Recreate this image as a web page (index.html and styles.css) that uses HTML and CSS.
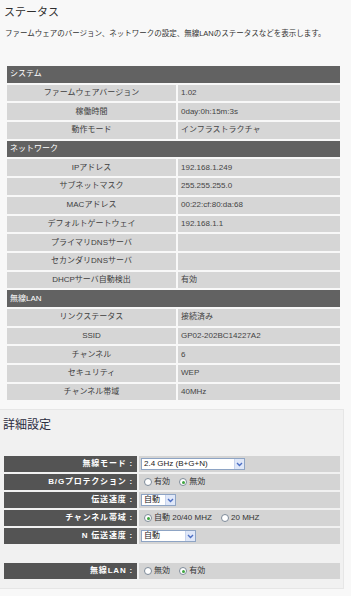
FILE: index.html
```html
<!DOCTYPE html>
<html lang="ja">
<head>
<meta charset="utf-8">
<title>ステータス</title>
<link rel="stylesheet" href="styles.css">
</head>
<body>
<div class="page">
  <section class="status">
    <h1 class="title">ステータス</h1>
    <p class="desc">ファームウェアのバージョン、ネットワークの設定、無線LANのステータスなどを表示します。</p>
    <table class="info">
      <colgroup><col class="c1"><col class="c2"></colgroup>
      <tr><th colspan="2" class="sec">システム</th></tr>
      <tr><td class="lbl">ファームウェアバージョン</td><td class="val">1.02</td></tr>
      <tr><td class="lbl">稼働時間</td><td class="val">0day:0h:15m:3s</td></tr>
      <tr><td class="lbl">動作モード</td><td class="val">インフラストラクチャ</td></tr>
      <tr><th colspan="2" class="sec">ネットワーク</th></tr>
      <tr><td class="lbl">IPアドレス</td><td class="val">192.168.1.249</td></tr>
      <tr><td class="lbl">サブネットマスク</td><td class="val">255.255.255.0</td></tr>
      <tr><td class="lbl">MACアドレス</td><td class="val">00:22:cf:80:da:68</td></tr>
      <tr><td class="lbl">デフォルトゲートウェイ</td><td class="val">192.168.1.1</td></tr>
      <tr><td class="lbl">プライマリDNSサーバ</td><td class="val"></td></tr>
      <tr><td class="lbl">セカンダリDNSサーバ</td><td class="val"></td></tr>
      <tr><td class="lbl">DHCPサーバ自動検出</td><td class="val">有効</td></tr>
      <tr><th colspan="2" class="sec">無線LAN</th></tr>
      <tr><td class="lbl">リンクステータス</td><td class="val">接続済み</td></tr>
      <tr><td class="lbl">SSID</td><td class="val">GP02-202BC14227A2</td></tr>
      <tr><td class="lbl">チャンネル</td><td class="val">6</td></tr>
      <tr><td class="lbl">セキュリティ</td><td class="val">WEP</td></tr>
      <tr><td class="lbl">チャンネル帯域</td><td class="val">40MHz</td></tr>
    </table>
  </section>

  <section class="adv">
    <h2 class="title2">詳細設定</h2>
    <table class="form">
      <colgroup><col class="f1"><col class="f2"></colgroup>
      <tr>
        <td class="flbl">無線モード :</td>
        <td class="fval">
          <span class="sel sel-mode"><span class="sel-text">2.4 GHz (B+G+N)</span><span class="sel-btn"><svg width="7" height="5" viewBox="0 0 7 5"><path d="M1 1 L3.5 3.5 L6 1" fill="none" stroke="#4d6fc4" stroke-width="1.4"/></svg></span></span>
        </td>
      </tr>
      <tr>
        <td class="flbl">B/Gプロテクション :</td>
        <td class="fval">
          <span class="radio"></span><span class="rlab">有効</span>
          <span class="radio on"></span><span class="rlab">無効</span>
        </td>
      </tr>
      <tr>
        <td class="flbl">伝送速度 :</td>
        <td class="fval">
          <span class="sel sel-rate"><span class="sel-text">自動</span><span class="sel-btn"><svg width="7" height="5" viewBox="0 0 7 5"><path d="M1 1 L3.5 3.5 L6 1" fill="none" stroke="#4d6fc4" stroke-width="1.4"/></svg></span></span>
        </td>
      </tr>
      <tr>
        <td class="flbl">チャンネル帯域 :</td>
        <td class="fval">
          <span class="radio on"></span><span class="rlab">自動 20/40 MHZ</span>
          <span class="radio"></span><span class="rlab">20 MHZ</span>
        </td>
      </tr>
      <tr>
        <td class="flbl">N 伝送速度 :</td>
        <td class="fval">
          <span class="sel sel-nrate"><span class="sel-text">自動</span><span class="sel-btn"><svg width="7" height="5" viewBox="0 0 7 5"><path d="M1 1 L3.5 3.5 L6 1" fill="none" stroke="#4d6fc4" stroke-width="1.4"/></svg></span></span>
        </td>
      </tr>
      <tr class="blank"><td></td><td></td></tr>
      <tr>
        <td class="flbl">無線LAN :</td>
        <td class="fval">
          <span class="radio"></span><span class="rlab">無効</span>
          <span class="radio on"></span><span class="rlab">有効</span>
        </td>
      </tr>
    </table>
  </section>
</div>
</body>
</html>
```

FILE: styles.css
```css
html, body {
  margin: 0;
  padding: 0;
}
body {
  background: #f8f8f8;
  font-family: "Liberation Sans", "Noto Sans CJK JP", sans-serif;
  color: #3a3a3a;
}
.page {
  width: 351px;
}
.status {
  padding: 0;
}
.title {
  margin: 0;
  padding: 4px 0 0 4px;
  font-family: "Noto Sans CJK JP", sans-serif;
  font-weight: normal;
  font-size: 11px;
  line-height: 14px;
  color: #2e2e2e;
}
.desc {
  margin: 11px 0 0 0;
  padding-left: 5px;
  font-size: 7.5px;
  line-height: 10px;
  color: #333;
  white-space: nowrap;
}
.info {
  margin: 25px 0 0 5px;
  width: 337px;
  border-collapse: separate;
  border-spacing: 2px;
  table-layout: fixed;
  font-size: 8px;
}
.info .c1 { width: 169px; }
.info .c2 { width: 162px; }
.info th,
.info td {
  height: 16.7px;
  padding: 0;
  line-height: 10px;
  box-sizing: border-box;
}
.info .sec {
  background: #626262;
  color: #fff;
  text-align: left;
  font-weight: normal;
  padding-left: 3px;
}
.info .lbl {
  background: #d6d6d6;
  text-align: center;
  color: #3e3e3e;
}
.info .val {
  background: #d6d6d6;
  text-align: left;
  padding-left: 3px;
  color: #444;
}

.adv {
  margin-top: 7px;
  width: 343px;
  background: #f1f1f1;
  border-top: 1px solid #e6e6e6;
  border-right: 1px solid #e6e6e6;
  border-bottom: 1px solid #e6e6e6;
  padding: 6px 0 7px 0;
}
.title2 {
  margin: 0;
  padding-left: 3px;
  font-family: "Noto Sans CJK JP", sans-serif;
  font-weight: normal;
  font-size: 12px;
  line-height: 16px;
  color: #2c2c3e;
}
.form {
  margin: 22px 0 0 2px;
  width: 340px;
  border-collapse: separate;
  border-spacing: 2px;
  table-layout: fixed;
  font-size: 8px;
}
.form .f1 { width: 133px; }
.form .f2 { width: 201px; }
.form td {
  height: 16px;
  padding: 0;
  box-sizing: border-box;
  line-height: 10px;
}
.form .flbl {
  background: #545454;
  color: #fff;
  font-weight: bold;
  text-align: right;
  padding-right: 4px;
  letter-spacing: 0.8px;
  white-space: nowrap;
}
.form .fval {
  background: #d4d4d4;
  padding-left: 2px;
  color: #333;
  white-space: nowrap;
}
.form .blank td {
  height: 15px;
  background: transparent;
}
.sel {
  display: inline-flex;
  align-items: stretch;
  vertical-align: middle;
  height: 12px;
  box-sizing: border-box;
  background: #fff;
  border: 1px solid #8ea4c4;
  font-size: 8px;
  line-height: 10px;
  color: #222;
}
.sel-text {
  flex: 1;
  padding-left: 2px;
}
.sel-btn {
  width: 9px;
  display: flex;
  align-items: center;
  justify-content: center;
  background: #dfe7f8;
  border-left: 1px solid #c8d4ee;
}
.sel-mode { width: 104px; }
.sel-rate { width: 35px; }
.sel-nrate { width: 55px; }
.radio {
  display: inline-block;
  vertical-align: middle;
  width: 8px;
  height: 8px;
  box-sizing: border-box;
  border-radius: 50%;
  border: 1px solid #7d8a99;
  background: #fff;
  margin: 0 2px 0 3px;
  position: relative;
}
.radio.on::after {
  content: "";
  position: absolute;
  left: 1.5px;
  top: 1.5px;
  width: 3px;
  height: 3px;
  border-radius: 50%;
  background: #3fa53f;
}
.rlab {
  vertical-align: middle;
  margin-right: 4px;
}
```
